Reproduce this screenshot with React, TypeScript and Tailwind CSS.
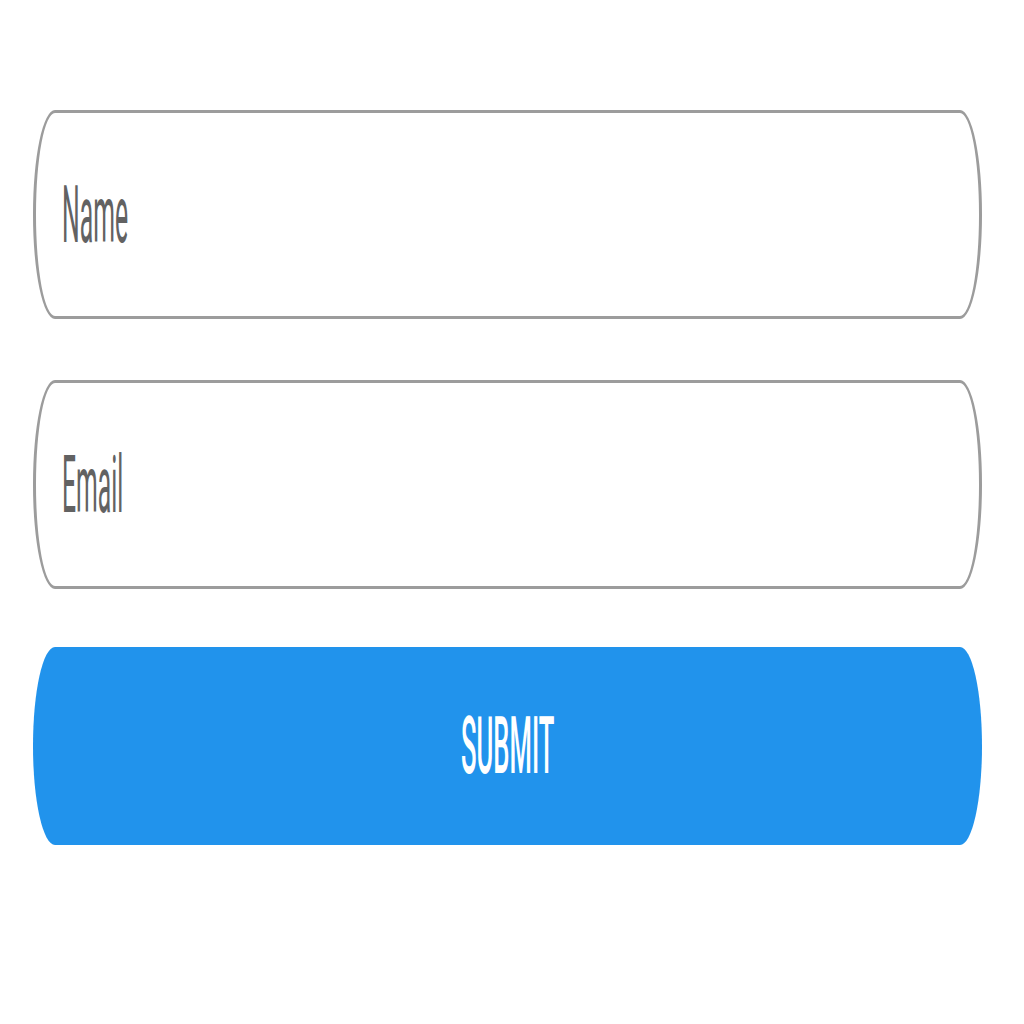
const Field = ({ label }: { label: string }) => (
  <div className="flex h-[209px] items-center rounded-[22px/104px] border-[3px] border-[#9c9c9c] bg-white pl-[26px]">
    <span className="inline-block origin-left scale-x-[0.31] font-['Roboto',sans-serif] text-[80px] leading-none text-[#626262]">
      {label}
    </span>
  </div>
);

export default function App() {
  return (
    <div className="min-h-screen bg-white pt-[110px]">
      <div className="ml-[33px] flex w-[949px] flex-col gap-[61px]">
        <Field label="Name" />
        <Field label="Email" />
        <button className="-mt-[3px] flex h-[198px] items-center justify-center rounded-[22px/99px] bg-[#2193ec]">
          <span className="inline-block scale-x-[0.32] font-['Roboto',sans-serif] text-[80px] font-medium leading-none text-white">
            SUBMIT
          </span>
        </button>
      </div>
    </div>
  );
}
